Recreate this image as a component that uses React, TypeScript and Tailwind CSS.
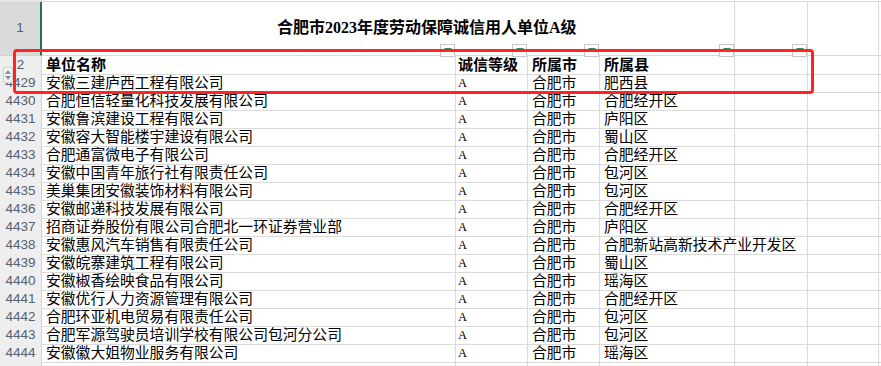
const rows: [string, string, string][] = [
  ["安徽三建庐西工程有限公司", "合肥市", "肥西县"],
  ["合肥恒信轻量化科技发展有限公司", "合肥市", "合肥经开区"],
  ["安徽鲁滨建设工程有限公司", "合肥市", "庐阳区"],
  ["安徽容大智能楼宇建设有限公司", "合肥市", "蜀山区"],
  ["合肥通富微电子有限公司", "合肥市", "合肥经开区"],
  ["安徽中国青年旅行社有限责任公司", "合肥市", "包河区"],
  ["美巢集团安徽装饰材料有限公司", "合肥市", "包河区"],
  ["安徽邮递科技发展有限公司", "合肥市", "合肥经开区"],
  ["招商证券股份有限公司合肥北一环证券营业部", "合肥市", "庐阳区"],
  ["安徽惠风汽车销售有限责任公司", "合肥市", "合肥新站高新技术产业开发区"],
  ["安徽皖寨建筑工程有限公司", "合肥市", "蜀山区"],
  ["安徽椒香绘映食品有限公司", "合肥市", "瑶海区"],
  ["安徽优行人力资源管理有限公司", "合肥市", "合肥经开区"],
  ["合肥环亚机电贸易有限责任公司", "合肥市", "包河区"],
  ["合肥军源驾驶员培训学校有限公司包河分公司", "合肥市", "包河区"],
  ["安徽徽大姐物业服务有限公司", "合肥市", "瑶海区"],
];

const cols = "grid grid-cols-[42px_414px_72px_72px_135px_73px_71px_1fr]";
const cell = "border-r border-b border-[#dadada] pt-[1px] whitespace-nowrap";
const rowHead =
  "border-r border-b border-[#d2d2d2] bg-[#eeeeee] text-center text-[13.5px] text-[#556070] font-['Liberation_Sans',sans-serif] leading-[17px]";

function FilterBtn({ left }: { left: number }) {
  return (
    <div
      className="absolute top-[42px] w-[15px] h-[13px] border border-[#c6c6c6] bg-white flex justify-center"
      style={{ left }}
    >
      <div className="mt-[3px] w-0 h-0 border-l-[4px] border-r-[4px] border-t-[4px] border-l-transparent border-r-transparent border-t-[#2e8b57]" />
    </div>
  );
}

export default function App() {
  return (
    <div className="relative w-[881px] h-[366px] overflow-hidden bg-white text-black font-['Liberation_Serif','Noto_Sans_CJK_SC',serif]">
      {/* 列头残边 */}
      <div className={`${cols} h-[2px]`}>
        <div className="bg-[#e6e6e6] border-r border-[#d2d2d2]" />
        <div className="col-span-7 border-b border-[#dadada]" />
      </div>

      {/* 第1行 标题 */}
      <div className={`${cols} h-[54px] relative`}>
        <div className="border-r-2 border-r-[#217346] border-b border-b-[#d2d2d2] bg-[#dadada] text-center text-[13.5px] text-[#556070] font-['Liberation_Sans',sans-serif] flex items-center justify-center">
          1
        </div>
        <div className={`${cell} col-span-4 flex items-center pl-[235px] pb-[2px] text-[16px] font-bold`}>
          合肥市2023年度劳动保障诚信用人单位A级
        </div>
        <div className={cell} />
        <div className={cell} />
        <div className="border-b border-[#dadada]" />
        <FilterBtn left={440} />
        <FilterBtn left={512} />
        <FilterBtn left={584} />
        <FilterBtn left={719} />
        <FilterBtn left={792} />
      </div>

      {/* 第2行 表头 */}
      <div className={`${cols} h-[18px] text-[15px] font-bold leading-[17px]`}>
        <div className={rowHead + " font-normal"}>2</div>
        <div className={`${cell} pl-[4px]`}>单位名称</div>
        <div className={`${cell} pl-[2px]`}>诚信等级</div>
        <div className={`${cell} pl-[4px]`}>所属市</div>
        <div className={`${cell} pl-[4px]`}>所属县</div>
        <div className={cell} />
        <div className={cell} />
        <div className="border-b border-[#dadada]" />
      </div>

      {rows.map(([name, city, county], i) => (
        <div key={i} className={`${cols} h-[18px] text-[14.8px] leading-[17px]`}>
          <div className={rowHead}>{4429 + i}</div>
          <div className={`${cell} pl-[4px]`}>{name}</div>
          <div className={`${cell} pl-[2px] text-[12.5px] font-['Liberation_Serif',serif]`}>A</div>
          <div className={`${cell} pl-[4px]`}>{city}</div>
          <div className={`${cell} pl-[4px]`}>{county}</div>
          <div className={cell} />
          <div className={cell} />
          <div className="border-b border-[#dadada]" />
        </div>
      ))}

      {/* 第4445行，只露出顶边 */}
      <div className={`${cols} h-[18px]`}>
        <div className="border-r border-[#d2d2d2] bg-[#eeeeee]" />
        <div className="border-r border-[#dadada]" />
        <div className="border-r border-[#dadada]" />
        <div className="border-r border-[#dadada]" />
        <div className="border-r border-[#dadada]" />
        <div className="border-r border-[#dadada]" />
        <div className="border-r border-[#dadada]" />
        <div />
      </div>

      {/* 行高调节图标 */}
      <div className="absolute left-[3px] top-[67px] w-[10px] h-[16px] rounded-[2px] border border-[#cfcfcf] bg-[#f4f4f4] flex flex-col items-center justify-center gap-[2px]">
        <div className="w-0 h-0 border-l-[3px] border-r-[3px] border-b-[4px] border-l-transparent border-r-transparent border-b-[#8792a4]" />
        <div className="w-0 h-0 border-l-[3px] border-r-[3px] border-t-[4px] border-l-transparent border-r-transparent border-t-[#8792a4]" />
      </div>

      {/* 红色标注框 */}
      <div className="absolute left-[13px] top-[49px] w-[801px] h-[45px] rounded-[4px] border-[3px] border-[#ff2323] pointer-events-none" />
    </div>
  );
}
